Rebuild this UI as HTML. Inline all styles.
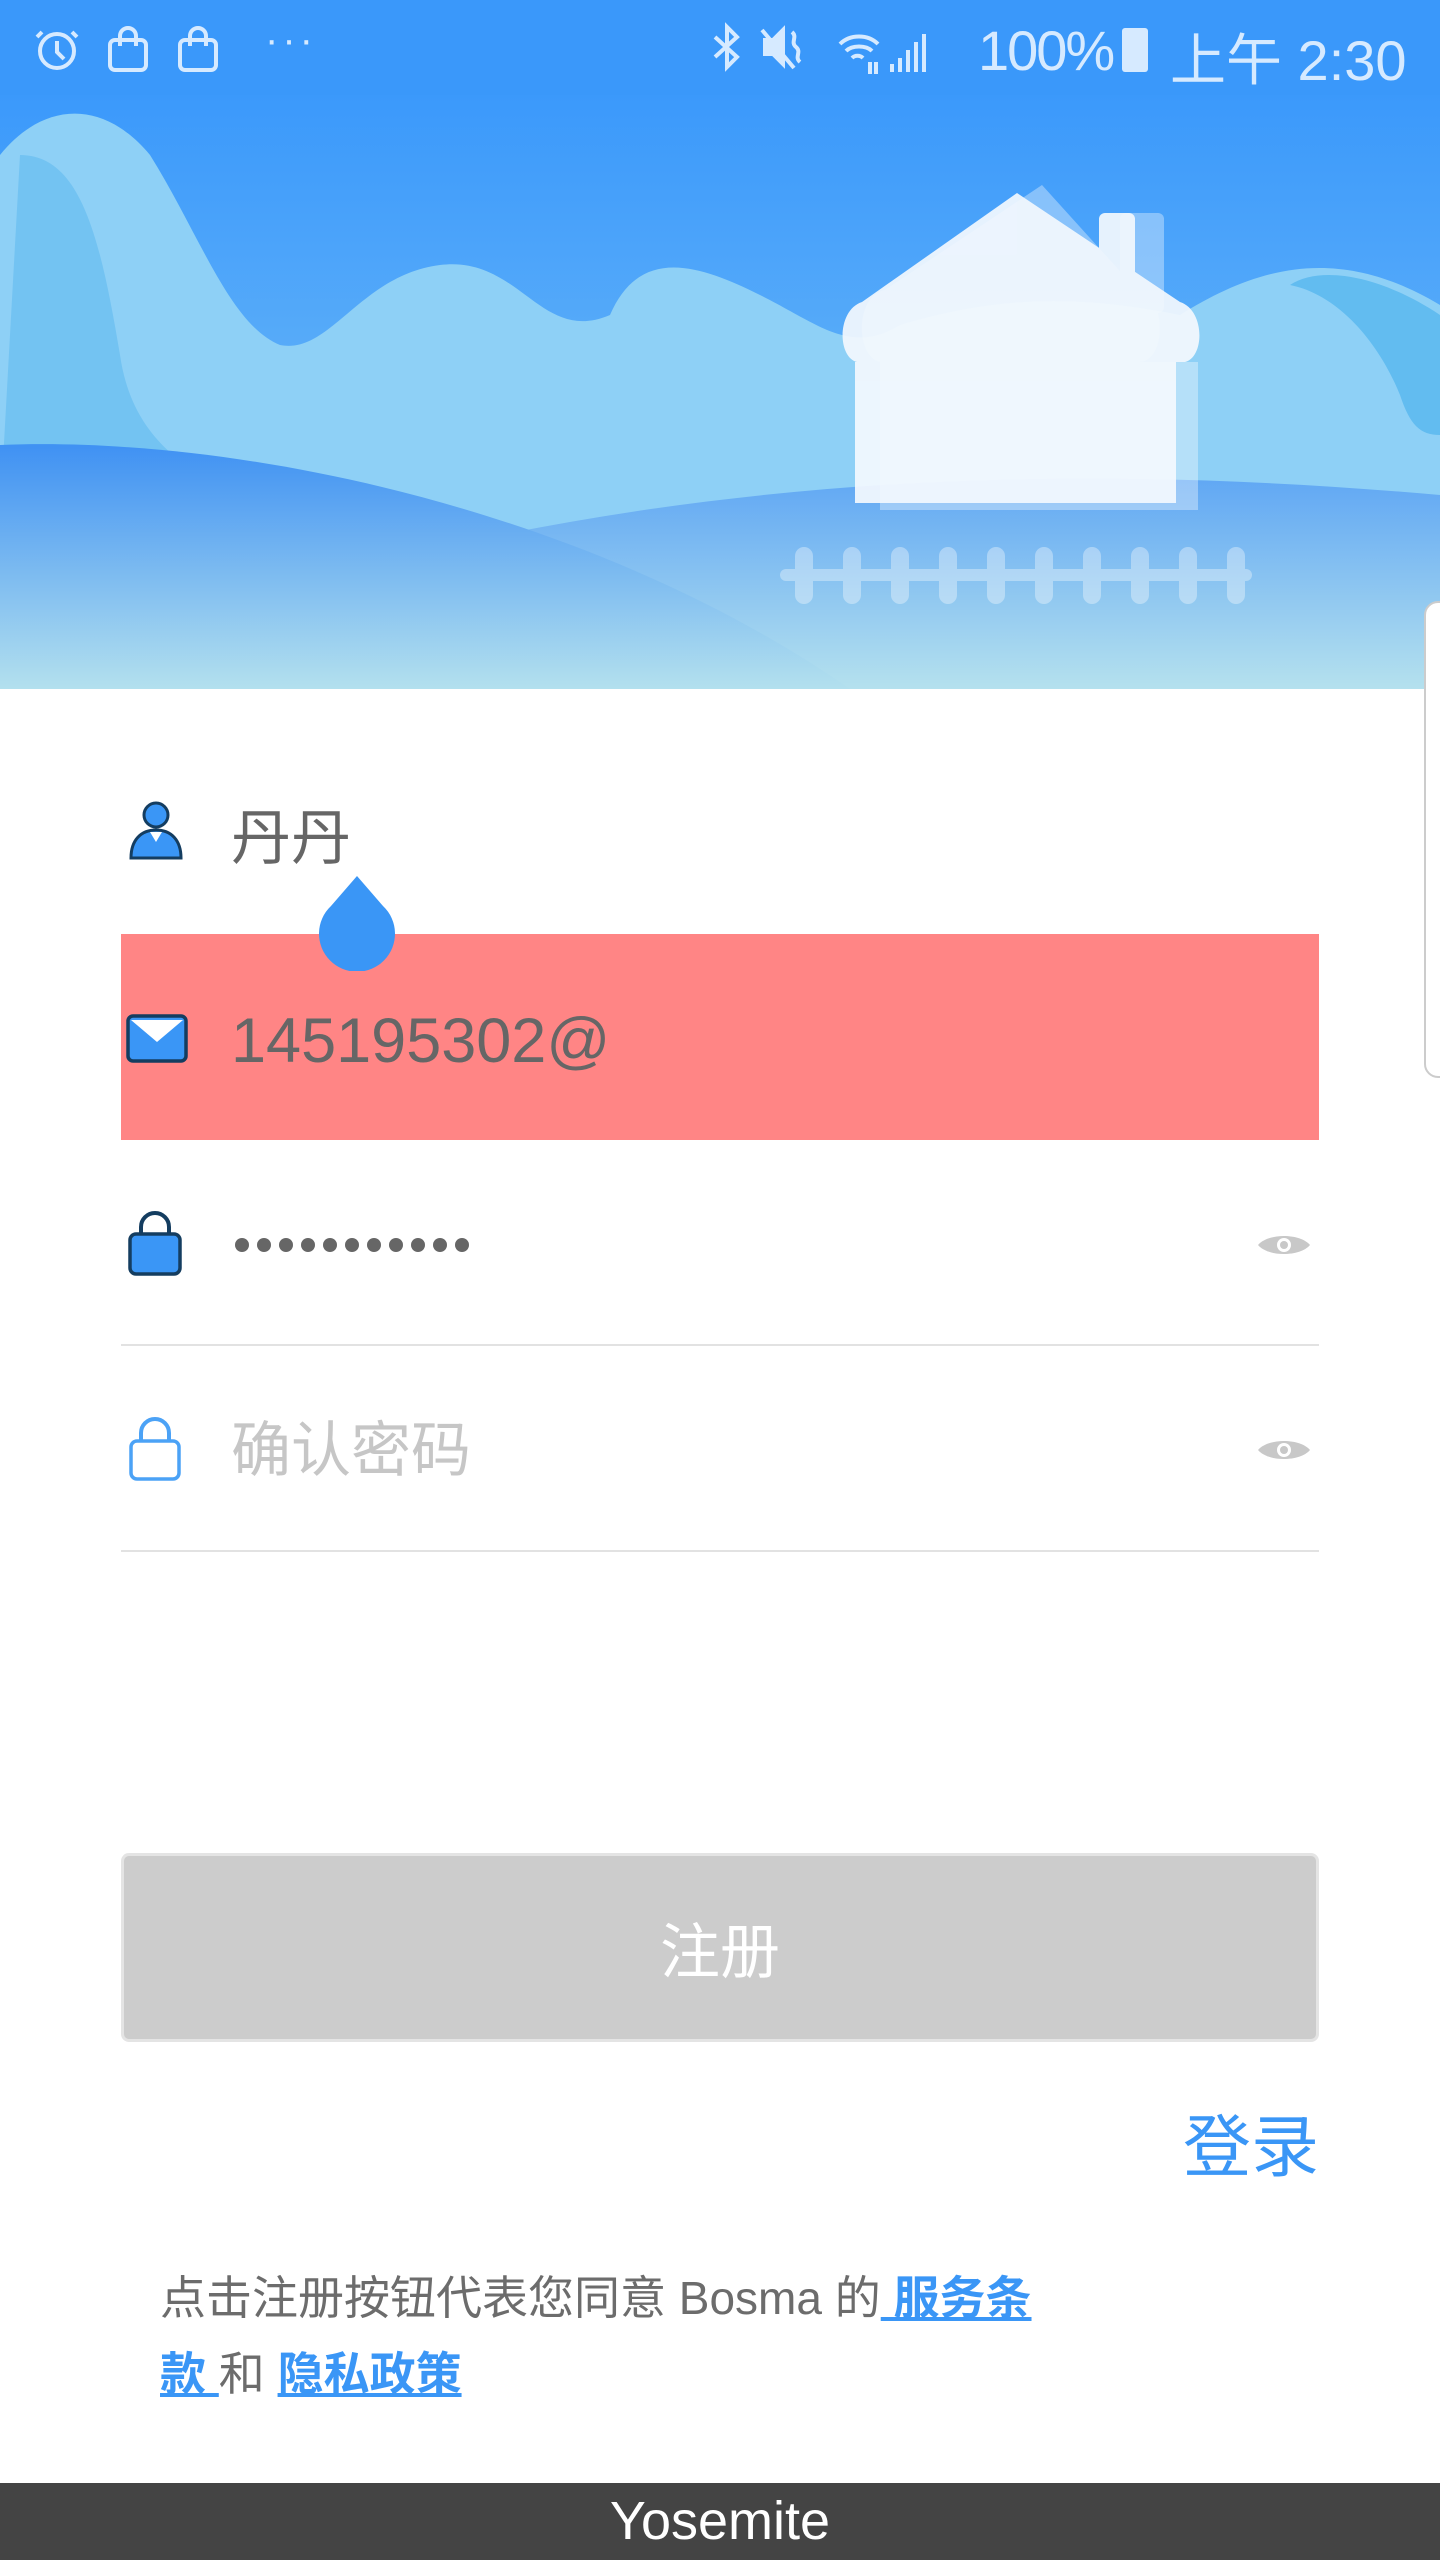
<!DOCTYPE html>
<html><head><meta charset="utf-8">
<style>
*{margin:0;padding:0;box-sizing:border-box}
body{width:1440px;height:2560px;position:relative;background:#fff;overflow:hidden;font-family:"Liberation Sans","Noto Sans CJK SC",sans-serif}
.abs{position:absolute}
.sb{left:0;top:0;width:1440px;height:95px;background:#3a98fa;color:#d6eaff}
.row-text{font-size:60px;color:#666;line-height:1}
.div{height:2px;background:#e2e2e2;left:121px;width:1198px}
</style></head><body>
<div class="abs sb">
  <svg class="abs" style="left:30px;top:24px" width="220" height="50" viewBox="0 0 220 50">
    <g fill="none" stroke="#d6eaff" stroke-width="4">
      <circle cx="27" cy="27" r="17"/><path d="M27 17v11l7 7M12 8l-5 5M42 8l5 5"/>
      <rect x="80" y="16" width="36" height="30" rx="5"/><path d="M90 22V12a8 8 0 0 1 16 0v10"/>
      <rect x="150" y="16" width="36" height="30" rx="5"/><path d="M160 22V12a8 8 0 0 1 16 0v10"/>
    </g>
  </svg>
  <div class="abs" style="left:265px;top:18px;font-size:40px;letter-spacing:4px">···</div>
  <svg class="abs" style="left:710px;top:22px" width="260" height="55" viewBox="0 0 260 55">
    <g fill="none" stroke="#d6eaff" stroke-width="4">
      <path d="M5 15l22 20-10 10V5l10 10L5 35"/>
      <path d="M55 18h8l10-10v34l-10-10h-8z" fill="#d6eaff"/><path d="M52 8l32 38M82 10c6 5-2 10 4 15s-2 10 4 15"/>
      <path d="M130 22c10-10 28-10 38 0M136 29c6-6 20-6 26 0M142 36c3-3 8-3 11 0"/>
      <path d="M160 40v12M166 40v12"/>
    </g>
    <g fill="#d6eaff"><rect x="180" y="42" width="4" height="8"/><rect x="188" y="36" width="4" height="14"/><rect x="196" y="28" width="4" height="22"/><rect x="204" y="20" width="4" height="30"/><rect x="212" y="12" width="4" height="38"/></g>
  </svg>
  <div class="abs" style="left:978px;top:18px;font-size:56px;letter-spacing:-2px">100%</div>
  <div class="abs" style="left:1122px;top:28px;width:26px;height:44px;background:#d6eaff;border-radius:3px"></div>
  <div class="abs" style="left:1170px;top:16px;font-size:56px">上午 2:30</div>
</div>
<svg class="abs" style="left:0;top:95px" width="1440" height="594" viewBox="0 0 1440 594">
  <defs>
    <linearGradient id="sky" x1="0" y1="0" x2="0" y2="1"><stop offset="0" stop-color="#3b99fb"/><stop offset="1" stop-color="#7cc3f6"/></linearGradient>
    <linearGradient id="hill" x1="0" y1="0" x2="0" y2="1"><stop offset="0" stop-color="#3f91f3"/><stop offset="1" stop-color="#b3e0ee"/></linearGradient>
    <linearGradient id="hill2" x1="0" y1="0" x2="0" y2="1"><stop offset="0" stop-color="#5aa3f4"/><stop offset="1" stop-color="#b5e1ee"/></linearGradient>
  </defs>
  <rect width="1440" height="594" fill="url(#sky)"/>
  <path d="M0 60C40 10 100 0 150 60C200 140 230 230 280 250C330 260 360 180 440 170C520 160 540 250 610 220C640 150 700 170 760 200C820 230 850 260 900 230C1000 200 1080 200 1180 220C1260 170 1340 150 1440 210V594H0Z" fill="#8ed0f6"/>
  <path d="M20 60C80 60 100 140 120 260C130 330 170 360 200 380L0 420Z" fill="#68bdf1" opacity=".7"/>
  <path d="M1290 190C1340 200 1380 250 1400 300C1410 330 1420 340 1440 340V220C1380 180 1320 170 1290 190Z" fill="#62bcf0"/>
  <path d="M0 370C150 360 300 380 500 440C800 380 1100 370 1440 400V594H0Z" fill="url(#hill2)"/>
  <path d="M0 350C250 340 600 420 850 594H0Z" fill="url(#hill)"/>
  <g fill="#ffffff" opacity=".35">
    <path d="M1042 90L1137 195C1167 200 1167 265 1140 267H880C855 262 855 200 885 195Z"/>
    <rect x="880" y="267" width="318" height="148"/>
    <rect x="1120" y="118" width="44" height="100" rx="6"/>
  </g>
  <g fill="#f4f9fe" opacity=".92">
    <path d="M1017 98L1180 207C1205 215 1205 262 1185 267H857C837 262 837 215 862 207Z"/>
    <rect x="855" y="267" width="321" height="141"/>
    <rect x="1099" y="118" width="36" height="90" rx="6"/>
  </g>
  <g fill="#ffffff" opacity=".35">
    <rect x="780" y="474" width="472" height="12" rx="6"/>
    <rect x="795" y="452" width="18" height="57" rx="9"/><rect x="843" y="452" width="18" height="57" rx="9"/><rect x="891" y="452" width="18" height="57" rx="9"/><rect x="939" y="452" width="18" height="57" rx="9"/><rect x="987" y="452" width="18" height="57" rx="9"/><rect x="1035" y="452" width="18" height="57" rx="9"/><rect x="1083" y="452" width="18" height="57" rx="9"/><rect x="1131" y="452" width="18" height="57" rx="9"/><rect x="1179" y="452" width="18" height="57" rx="9"/><rect x="1227" y="452" width="18" height="57" rx="9"/>
  </g>
</svg>
<div class="abs" style="left:1424px;top:601px;width:30px;height:477px;border:2px solid #ccc;border-radius:14px;background:#fff"></div>

<svg class="abs" style="left:127px;top:800px" width="58" height="62" viewBox="0 0 58 62">
  <circle cx="29" cy="15" r="12" fill="#3a96f6" stroke="#143d60" stroke-width="3"/>
  <path d="M4 58c0-18 10-28 25-28s25 10 25 28z" fill="#3a96f6" stroke="#143d60" stroke-width="3"/>
  <path d="M23 32h12l-6 10z" fill="#fff"/>
</svg>
<div class="abs row-text" style="left:231px;top:804px;font-family:'Noto Sans CJK SC',sans-serif">丹丹</div>

<div class="abs" style="left:121px;top:934px;width:1198px;height:206px;background:#ff8585"></div>
<svg class="abs" style="left:126px;top:1014px" width="62" height="50" viewBox="0 0 62 50">
  <rect x="2" y="2" width="58" height="45" rx="5" fill="#3a96f6" stroke="#143d60" stroke-width="3.5"/>
  <path d="M5 6l26 22L57 6z" fill="#fff"/>
</svg>
<div class="abs row-text" style="left:231px;top:1010px;font-size:63px">145195302@</div>
<svg class="abs" style="left:317px;top:876px" width="80" height="95" viewBox="0 0 80 95">
  <path d="M40 0L66 30a38 38 0 1 1-52 0z" fill="#3a96f6"/>
</svg>

<svg class="abs" style="left:127px;top:1210px" width="56" height="66" viewBox="0 0 56 66">
  <path d="M14 26V17a14 14 0 0 1 28 0v9" fill="none" stroke="#143d60" stroke-width="4"/>
  <rect x="3" y="24" width="50" height="40" rx="6" fill="#3a96f6" stroke="#143d60" stroke-width="3.5"/>
</svg>
<svg class="abs" style="left:234px;top:1235px" width="240" height="20" viewBox="0 0 240 20">
  <g fill="#666"><circle cx="8" cy="10" r="7"/><circle cx="30" cy="10" r="7"/><circle cx="52" cy="10" r="7"/><circle cx="74" cy="10" r="7"/><circle cx="96" cy="10" r="7"/><circle cx="118" cy="10" r="7"/><circle cx="140" cy="10" r="7"/><circle cx="162" cy="10" r="7"/><circle cx="184" cy="10" r="7"/><circle cx="206" cy="10" r="7"/><circle cx="228" cy="10" r="7"/></g>
</svg>
<svg class="abs" style="left:1256px;top:1230px" width="56" height="30" viewBox="0 0 56 30">
  <path d="M2 15C12 3 44 3 54 15C44 27 12 27 2 15z" fill="#c8c8c8"/><circle cx="28" cy="15" r="7" fill="#fff"/><circle cx="28" cy="15" r="4" fill="#c8c8c8"/>
</svg>
<div class="abs div" style="top:1344px"></div>

<svg class="abs" style="left:127px;top:1416px" width="56" height="66" viewBox="0 0 56 66">
  <path d="M14 26V17a14 14 0 0 1 28 0v9" fill="none" stroke="#4ba2f6" stroke-width="4"/>
  <rect x="4" y="25" width="48" height="38" rx="6" fill="#fff" stroke="#4ba2f6" stroke-width="3.5"/>
</svg>
<div class="abs row-text" style="left:231px;top:1416px;color:#c6c6c6;font-size:60px;font-family:'Noto Sans CJK SC',sans-serif">确认密码</div>
<svg class="abs" style="left:1256px;top:1435px" width="56" height="30" viewBox="0 0 56 30">
  <path d="M2 15C12 3 44 3 54 15C44 27 12 27 2 15z" fill="#c8c8c8"/><circle cx="28" cy="15" r="7" fill="#fff"/><circle cx="28" cy="15" r="4" fill="#c8c8c8"/>
</svg>
<div class="abs div" style="top:1550px"></div>

<div class="abs" style="left:121px;top:1853px;width:1198px;height:189px;background:#cccccc;border-radius:8px;border:3px solid #e4e4e4;color:#fff;font-size:60px;text-align:center;line-height:183px;font-family:'Noto Sans CJK SC',sans-serif">注册</div>

<div class="abs" style="right:121px;top:2092px;font-size:68px;color:#3a96f6;font-family:'Noto Sans CJK SC',sans-serif">登录</div>

<div class="abs" style="left:160px;top:2260px;width:880px;font-size:46px;line-height:76px;color:#6c6c6c">点击注册按钮代表您同意 Bosma 的<a style="color:#3a96f6;font-weight:bold;text-decoration:underline"> 服务条款 </a>和 <a style="color:#3a96f6;font-weight:bold;text-decoration:underline">隐私政策</a></div>

<div class="abs" style="left:0;top:2483px;width:1440px;height:77px;background:#444;color:#fff;font-size:54px;text-align:center;line-height:77px">Yosemite</div>
</body></html>
